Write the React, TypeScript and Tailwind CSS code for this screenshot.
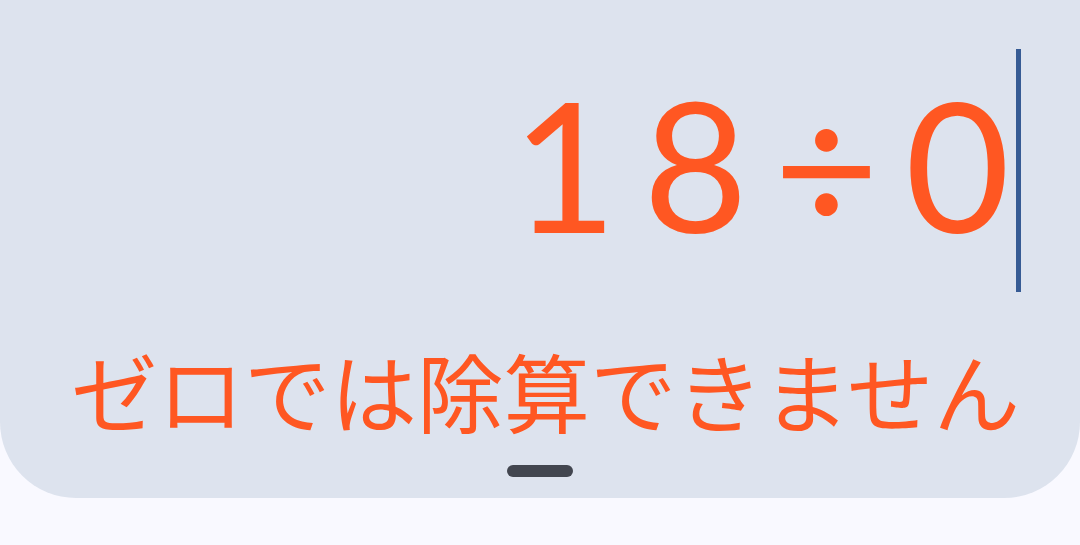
export default function App() {
  return (
    <div className="min-h-screen w-full bg-[#f9f9ff]">
      <div className="flex h-[498px] flex-col rounded-b-[76px] bg-[#dde3ee]">
        <div className="mt-[49px] flex h-[243px] items-center justify-end pr-[59px]">
          <span
            className="-mr-[26px] -mt-[14px] text-[181px] font-normal leading-none tracking-[26px] text-[#ff5722]"
            style={{ fontFamily: "Lato, 'Noto Sans', sans-serif" }}
          >
            18÷0
          </span>
          <div className="ml-[6px] h-[243px] w-[5px] bg-[#365b94]" />
        </div>
        <div
          className="mt-[55px] pr-[60px] text-right text-[86.5px] leading-none text-[#ff5722]"
          style={{ fontFamily: "'Noto Sans CJK JP', sans-serif" }}
        >
          ゼロでは除算できません
        </div>
        <div className="mt-[31px] h-[12px] w-[66px] self-center rounded-full bg-[#42464f]" />
      </div>
    </div>
  );
}
